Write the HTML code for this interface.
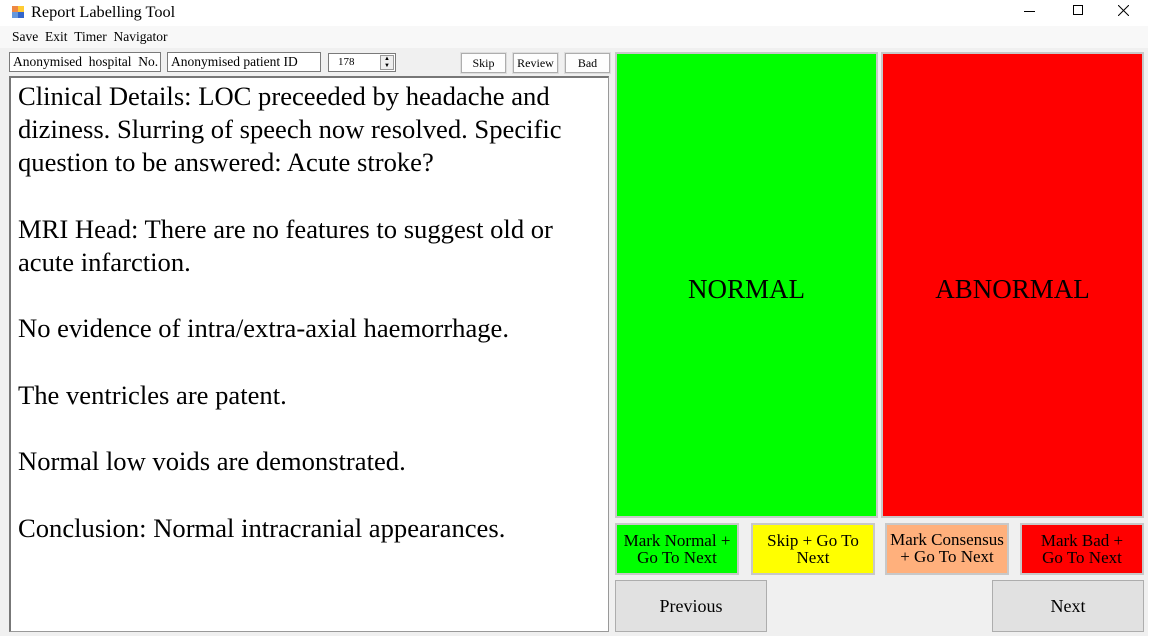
<!DOCTYPE html><html><head><style>
body{margin:0;width:1153px;height:643px;background:#fff;font-family:"Liberation Serif",serif;position:relative;overflow:hidden}
.a{position:absolute;box-sizing:border-box}
.menu{top:26px;left:0;width:1148px;height:22px;background:#f8f8f8;font-size:13.5px}
.body{top:48px;left:0;width:1148px;height:588px;background:#f0f0f0}
.in{background:#fff;border:1px solid #7a7a7a;font-size:13.5px;padding:1px 3px;white-space:nowrap}
.btn{background:#fdfdfd;border:1px solid #adadad;outline:1px solid #ddd;font-size:12px;text-align:center;line-height:19px}
.cb{border:2px solid #c8c8c8;font-size:17px;text-align:center;line-height:17px;display:flex;align-items:center;justify-content:center}
.nb{background:#e1e1e1;border:1px solid #adadad;font-size:18px;display:flex;align-items:center;justify-content:center}
</style></head><body>
<div class="a" style="left:12px;top:6px;width:12px;height:12px">
<div class="a" style="left:0;top:0;width:6px;height:6px;background:#e84"></div><div class="a" style="left:6px;top:0;width:6px;height:6px;background:#fc3"></div><div class="a" style="left:0;top:6px;width:6px;height:6px;background:#69d"></div><div class="a" style="left:6px;top:6px;width:6px;height:6px;background:#36c"></div></div>
<div class="a" style="left:31px;top:2px;font-size:16.3px">Report Labelling Tool</div>
<div class="a" style="left:1024px;top:11px;width:11px;height:1px;background:#000"></div>
<div class="a" style="left:1073px;top:5px;width:10px;height:10px;border:1px solid #000"></div>
<svg class="a" style="left:1118px;top:5px" width="11" height="11"><path d="M0 0L11 11M11 0L0 11" stroke="#000"/></svg>
<div class="a menu"><span style="position:absolute;left:12px;top:3px">Save&nbsp;&nbsp;Exit&nbsp;&nbsp;Timer&nbsp;&nbsp;Navigator</span></div>
<div class="a body"></div>
<div class="a in" style="left:9px;top:52px;width:152px;height:20px">Anonymised&nbsp; hospital&nbsp; No.</div>
<div class="a in" style="left:167px;top:52px;width:154px;height:20px">Anonymised patient ID</div>
<div class="a in" style="left:328px;top:53px;width:68px;height:19px;font-size:11px;padding-left:9px;padding-top:2px">178
<div class="a" style="right:1px;top:1px;width:14px;height:15px;border:1px solid #999;background:#eee;font-size:6px;line-height:7px;text-align:center">▲<br>▼</div></div>
<div class="a btn" style="left:461px;top:53px;width:45px;height:20px">Skip</div>
<div class="a btn" style="left:513px;top:53px;width:45px;height:20px">Review</div>
<div class="a btn" style="left:565px;top:53px;width:45px;height:20px">Bad</div>
<div class="a" style="left:9px;top:76px;width:600px;height:556px;background:#fff;border:1px solid #999;border-left:2px solid #777;border-top:2px solid #777;font-size:26.6px;line-height:33.2px;padding:2px 0 0 7px;white-space:nowrap">
Clinical Details: LOC preceeded by headache and<br>diziness. Slurring of speech now resolved. Specific<br>question to be answered: Acute stroke?<br><br>MRI Head: There are no features to suggest old or<br>acute infarction.<br><br>No evidence of intra/extra-axial haemorrhage.<br><br>The ventricles are patent.<br><br>Normal low voids are demonstrated.<br><br>Conclusion: Normal intracranial appearances.</div>
<div class="a cb" style="left:615px;top:52px;width:263px;height:466px;background:#00ff00;font-size:27px;padding-top:8px">NORMAL</div>
<div class="a cb" style="left:881px;top:52px;width:263px;height:466px;background:#ff0000;font-size:27px;padding-top:8px">ABNORMAL</div>
<div class="a cb" style="left:615px;top:523px;width:124px;height:52px;background:#00ff00">Mark Normal +<br>Go To Next</div>
<div class="a cb" style="left:751px;top:523px;width:124px;height:52px;background:#ffff00">Skip + Go To<br>Next</div>
<div class="a cb" style="left:885px;top:523px;width:124px;height:52px;background:#ffb07c;align-items:flex-start;padding-top:6px">Mark Consensus<br>+ Go To Next</div>
<div class="a cb" style="left:1020px;top:523px;width:124px;height:52px;background:#ff0000">Mark Bad +<br>Go To Next</div>
<div class="a nb" style="left:615px;top:580px;width:152px;height:52px">Previous</div>
<div class="a nb" style="left:992px;top:580px;width:152px;height:52px">Next</div>
</body></html>
